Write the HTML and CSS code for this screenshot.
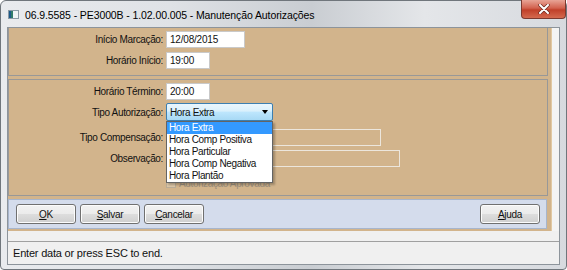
FILE: index.html
```html
<!DOCTYPE html>
<html lang="pt">
  <head>
    <meta charset="UTF-8" />
    <title>Manutenção Autorizações</title>
    <link rel="stylesheet" href="styles.css">
  </head>

  <body>
    <div class="window">
      <div class="titlebar">
        <svg class="app-icon" width="11" height="9" viewBox="0 0 11 9">
          <rect x="0.5" y="0.5" width="10" height="8" fill="#eef3f6" stroke="#8a9aa6" />
          <rect x="1" y="1" width="4" height="7" fill="#2f7a6a" />
          <rect x="1" y="1" width="2" height="7" fill="#1d5a8a" />
        </svg>
        <span class="title">06.9.5585 - PE3000B - 1.02.00.005 - Manutenção Autorizações</span>
        <div class="close-btn">
          <svg width="12" height="10" viewBox="0 0 12 10">
            <path d="M2 1 L10 9 M10 1 L2 9" stroke="#6e2a20" stroke-width="3.4" stroke-linecap="round" />
            <path d="M2 1 L10 9 M10 1 L2 9" stroke="#fff" stroke-width="2" stroke-linecap="round" />
          </svg>
        </div>
      </div>

      <div class="client">
        <div class="main-area">
          <div class="panel">
            <div class="group group-top">
              <div class="row">
                <span class="label">Início Marcação:</span>
                <div class="field w-date">12/08/2015</div>
              </div>
              <div class="row gap-4">
                <span class="label">Horário Início:</span>
                <div class="field w-time">19:00</div>
              </div>
            </div>

            <div class="group group-main">
              <div class="row">
                <span class="label">Horário Término:</span>
                <div class="field w-time">20:00</div>
              </div>
              <div class="row gap-3">
                <span class="label">Tipo Autorização:</span>
                <div class="combo">
                  <span>Hora Extra</span>
                  <span class="combo-arrow"></span>
                </div>
              </div>
              <div class="row gap-8">
                <span class="label">Tipo Compensação:</span>
                <div class="field disabled w-comp"></div>
              </div>
              <div class="row gap-4">
                <span class="label">Observação:</span>
                <div class="field disabled w-obs"></div>
              </div>
              <div class="row check-row">
                <span class="label"></span>
                <span class="checkbox"></span>
                <span class="check-text">Autorização Aprovada</span>
              </div>

              <ul class="dropdown">
                <li class="selected">Hora Extra</li>
                <li>Hora Comp Positiva</li>
                <li>Hora Particular</li>
                <li>Hora Comp Negativa</li>
                <li>Hora Plantão</li>
              </ul>
            </div>

            <div class="button-bar">
              <div class="btn"><u>O</u>K</div>
              <div class="btn"><u>S</u>alvar</div>
              <div class="btn"><u>C</u>ancelar</div>
              <div class="spacer"></div>
              <div class="btn"><u>A</u>juda</div>
            </div>
          </div>
          <div class="side-strip"></div>
        </div>
        <div class="gap-strip"></div>
        <div class="status">Enter data or press ESC to end.</div>
      </div>
    </div>
  </body>
</html>
```

FILE: styles.css
```css
html, body {
  margin: 0;
  padding: 0;
  width: 567px;
  height: 270px;
  overflow: hidden;
  background: #ffffff;
}

body {
  font-family: "Liberation Sans", Arial, sans-serif;
  color: #111;
}

.window {
  box-sizing: border-box;
  width: 567px;
  height: 270px;
  border: 1px solid #70767c;
  border-radius: 6px 6px 4px 4px;
  padding: 0 6px 4px 6px;
  background: linear-gradient(90deg, #e9ebee 0%, #dfe2e6 30%, #c9cdd2 55%, #e4e6e9 75%, #d7dadf 100%);
  display: flex;
  flex-direction: column;
}

/* title bar */
.titlebar {
  height: 26px;
  display: flex;
  align-items: center;
  position: relative;
}

.app-icon {
  margin: 1px 6px 0 1px;
}

.title {
  font-size: 10.5px;
  letter-spacing: -0.1px;
  color: #000;
  margin-top: 1px;
}

.close-btn {
  position: absolute;
  top: -1px;
  right: -6px;
  width: 45px;
  height: 19px;
  box-sizing: border-box;
  border: 1px solid #7c3a30;
  border-top: none;
  border-radius: 0 0 4px 4px;
  background: linear-gradient(180deg, #e8a496 0%, #d2614e 45%, #c0402a 55%, #d46a4f 100%);
  display: flex;
  align-items: center;
  justify-content: center;
}

/* client area */
.client {
  flex: 1;
  display: flex;
  flex-direction: column;
  border: 1px solid #8d949b;
  background: #f0f0f0;
}

.main-area {
  display: flex;
}

.panel {
  width: 543px;
  background: #d2b48c;
  padding: 0 3px 2px 0;
  box-sizing: border-box;
}

.side-strip {
  flex: 1;
  background: #f4f4f4;
  border-left: 1px solid #e2c9a2;
}

.group {
  border: 1px solid #989898;
  position: relative;
}

.group-top {
  border-top: none;
  padding: 3px 0 6px 0;
}

.group-main {
  margin-top: 3px;
  padding: 3px 0 7px 0;
}

.row {
  display: flex;
  align-items: center;
  font-size: 10px;
  letter-spacing: -0.35px;
}

.gap-3 { margin-top: 3px; }
.gap-4 { margin-top: 4px; }
.gap-8 { margin-top: 8px; }

.label {
  width: 154px;
  text-align: right;
  margin-right: 3px;
  flex-shrink: 0;
}

.field {
  box-sizing: border-box;
  height: 17px;
  line-height: 15px;
  background: #fff;
  border: 1px solid #c9c9c9;
  padding-left: 3px;
  font-size: 10px;
  letter-spacing: -0.2px;
}

.field.disabled {
  background: transparent;
  border-color: #ece6dc;
}

.w-date { width: 79px; }
.w-time { width: 44px; }
.w-comp { width: 215px; }
.w-obs { width: 234px; }

.combo {
  box-sizing: border-box;
  width: 107px;
  height: 18px;
  border: 1px solid #3c7fb1;
  border-radius: 2px;
  background: linear-gradient(180deg, #eaf6fd 0%, #d9f0fc 45%, #bee6fd 50%, #a7d9f5 100%);
  display: flex;
  align-items: center;
  justify-content: space-between;
  padding: 0 4px 0 3px;
  font-size: 10px;
}

.combo-arrow {
  width: 0;
  height: 0;
  border-left: 3.5px solid transparent;
  border-right: 3.5px solid transparent;
  border-top: 4px solid #000;
}

.check-row {
  margin-top: 10px;
  height: 11px;
}

.checkbox {
  box-sizing: border-box;
  width: 10px;
  height: 10px;
  margin-right: 3px;
  border: 1px solid #b9ab96;
  background: #dcc6a6;
}

.check-text {
  color: #9b8f7e;
  margin-top: 2px;
}

/* open list of Tipo Autorização */
.dropdown {
  position: absolute;
  left: 157px;
  top: 41px;
  width: 107px;
  box-sizing: border-box;
  margin: 0;
  padding: 0;
  list-style: none;
  background: #fff;
  border: 1px solid #646464;
  box-shadow: 2px 2px 2px rgba(0, 0, 0, 0.25);
  font-size: 10px;
  letter-spacing: -0.35px;
}

.dropdown li {
  height: 12px;
  line-height: 12px;
  padding-left: 2px;
}

.dropdown li.selected {
  background: #3399ff;
  color: #fff;
}

/* buttons */
.button-bar {
  margin-top: 3px;
  width: 539px;
  box-sizing: border-box;
  height: 30px;
  border: 1px solid #a7b5cc;
  background: #d4dcec;
  display: flex;
  align-items: center;
  gap: 4px;
  padding: 0 6px 0 7px;
}

.spacer {
  flex: 1;
}

.btn {
  box-sizing: border-box;
  width: 60px;
  height: 20px;
  border: 1px solid #707070;
  border-radius: 3px;
  background: linear-gradient(180deg, #f2f2f2 0%, #ebebeb 50%, #dddddd 51%, #cfcfcf 100%);
  box-shadow: inset 0 0 0 1px #fcfcfc;
  font-size: 10px;
  letter-spacing: -0.3px;
  display: flex;
  align-items: center;
  justify-content: center;
}

.gap-strip {
  height: 10px;
  border-bottom: 1px solid #a0a0a0;
}

.status {
  flex: 1;
  padding-left: 5px;
  font-size: 11px;
  letter-spacing: -0.2px;
  display: flex;
  align-items: center;
  background: #f0f0f0;
}
```
